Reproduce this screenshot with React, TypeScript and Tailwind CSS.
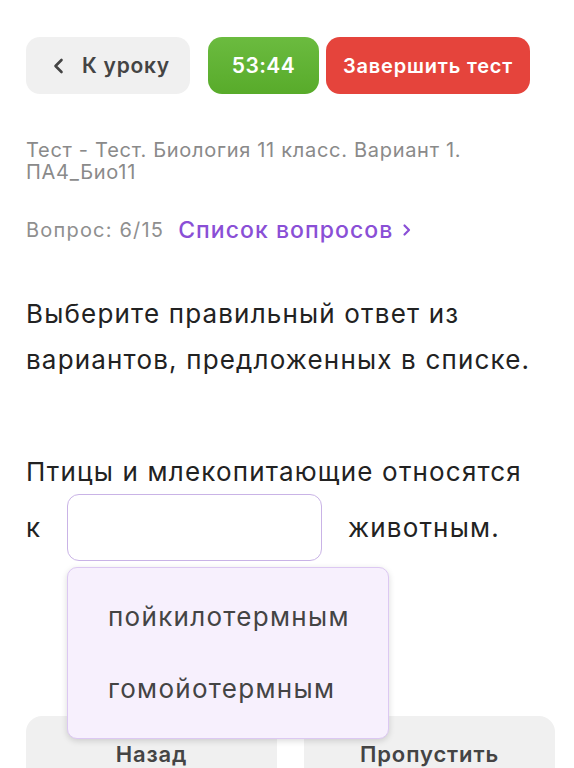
import React from "react";

const font = { fontFamily: "Inter, 'Noto Sans', sans-serif" };

const ChevronLeft = () => (
  <svg width="18" height="18" viewBox="0 0 18 18" fill="none">
    <path d="M11.5 3L5.5 9l6 6" stroke="#444" strokeWidth="2.6" strokeLinecap="round" strokeLinejoin="round" />
  </svg>
);

const ChevronRight = () => (
  <svg width="12" height="14" viewBox="0 0 12 14" fill="none">
    <path d="M3.5 2.5L8 7l-4.5 4.5" stroke="#8a4fd6" strokeWidth="2.2" strokeLinecap="round" strokeLinejoin="round" />
  </svg>
);

const options = ["пойкилотермным", "гомойотермным"];

export default function App() {
  return (
    <div className="h-[768px] w-full overflow-hidden bg-white px-[26px] pt-[37px]" style={font}>
      {/* top buttons */}
      <div className="flex items-center">
        <button className="flex h-[57px] w-[164px] items-center justify-center gap-[14px] rounded-[14px] bg-[#f0f0f0] pl-1 text-[21px] font-semibold tracking-[0.035em] text-[#444]">
          <ChevronLeft />
          К уроку
        </button>
        <div className="ml-[18px] flex h-[57px] w-[111px] items-center justify-center rounded-[14px] bg-gradient-to-b from-[#6bbb3f] to-[#58ab2a] text-[21px] font-semibold tracking-[0.02em] text-white">
          53:44
        </div>
        <button className="ml-[7px] flex h-[57px] w-[204px] items-center justify-center rounded-[14px] bg-[#e5443c] text-[20px] font-semibold tracking-[0.04em] text-white">
          Завершить тест
        </button>
      </div>

      <p className="mt-[45px] text-[20px] leading-[22px] tracking-[0.035em] text-[#8a8a8a]">
        Тест - Тест. Биология 11 класс. Вариант 1.
        <br />
        ПА4_Био11
      </p>

      <div className="mt-[30px] flex items-center gap-3.5">
        <span className="text-[20px] tracking-[0.06em] text-[#8f8f8f]">Вопрос: 6/15</span>
        <span className="flex items-center gap-2 text-[23px] font-medium tracking-[0.045em] text-[#8a4fd6]">
          Список вопросов
          <ChevronRight />
        </span>
      </div>

      <p className="mt-[43px] text-[26px] leading-[46px] tracking-[0.045em] text-[#222]">
        Выберите правильный ответ из
        <br />
        вариантов, предложенных в списке.
      </p>

      <p className="mt-[66px] text-[26px] leading-[46px] tracking-[0.045em] text-[#222]">
        Птицы и млекопитающие относятся
      </p>

      <div className="-mt-[1px] flex items-center">
        <span className="w-[41px] text-[26px] text-[#222]">к</span>
        <div className="relative">
          <div className="h-[67px] w-[255px] rounded-[12px] border border-[#c9b3e6] bg-white" />
          <div className="absolute left-0 top-[73px] z-10 w-[322px] rounded-[10px] border border-[#dcc8f2] bg-[#f7f0fd] py-[13px] shadow-[0_2px_6px_rgba(0,0,0,0.15)]">
            {options.map((o) => (
              <div
                key={o}
                className="flex h-[72px] items-center px-[40px] text-[26px] tracking-[0.05em] text-[#444]"
              >
                {o}
              </div>
            ))}
          </div>
        </div>
        <span className="ml-[26px] text-[26px] tracking-[0.045em] text-[#222]">животным.</span>
      </div>

      <div className="-mr-[7px] mt-[155px] flex gap-[27px]">
        <button className="flex h-[70px] flex-1 items-start justify-center rounded-[16px] bg-[#f0f0f0] pt-[22px] text-[22px] font-semibold tracking-[0.04em] text-[#444]">
          Назад
        </button>
        <button className="flex h-[70px] flex-1 items-start justify-center rounded-[16px] bg-[#f0f0f0] pt-[22px] text-[22px] font-semibold tracking-[0.04em] text-[#444]">
          Пропустить
        </button>
      </div>
    </div>
  );
}
